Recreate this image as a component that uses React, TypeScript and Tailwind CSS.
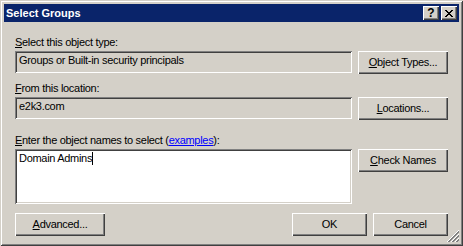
import type { ReactNode } from "react";

const raised =
  "bg-[#d4d0c8] shadow-[inset_1px_1px_0_#ffffff,inset_-1px_-1px_0_#404040,inset_-2px_-2px_0_#808080]";
const sunken =
  "shadow-[inset_1px_1px_0_#808080,inset_-1px_-1px_0_#ffffff,inset_2px_2px_0_#404040,inset_-2px_-2px_0_#d4d0c8]";

const Key = ({ children }: { children: ReactNode }) => <span className="underline underline-offset-[1px]">{children}</span>;

const Button = ({ children, className = "" }: { children: ReactNode; className?: string }) => (
  <button className={`${raised} h-[23px] flex items-center justify-center text-black leading-[13px] ${className}`}>
    {children}
  </button>
);

const XGlyph = () => (
  <svg width="8" height="7" viewBox="0 0 8 7" shapeRendering="crispEdges">
    {[0, 1, 2, 3, 4, 5, 6].map((i) => (
      <g key={i} fill="#000">
        <rect x={i} y={i} width="2" height="1" />
        <rect x={6 - i} y={i} width="2" height="1" />
      </g>
    ))}
  </svg>
);

const SizeGrip = () => {
  const px: { x: number; y: number; c: string }[] = [];
  const lines: [number, string][] = [
    [11, "#ffffff"], [12, "#808080"], [13, "#808080"],
    [15, "#ffffff"], [16, "#808080"], [17, "#808080"],
    [19, "#ffffff"], [20, "#808080"], [21, "#808080"],
  ];
  lines.forEach(([s, c]) => {
    for (let x = s - 11; x <= 11; x++) px.push({ x, y: s - x, c });
  });
  return (
    <svg width="12" height="12" viewBox="0 0 12 12" shapeRendering="crispEdges" className="absolute right-[4px] bottom-[4px]">
      {px.map((p, i) => (
        <rect key={i} x={p.x} y={p.y} width="1" height="1" fill={p.c} />
      ))}
    </svg>
  );
};

export default function App() {
  return (
    <div className="relative w-[463px] h-[246px] bg-[#d4d0c8] p-[4px] shadow-[inset_1px_1px_0_#d4d0c8,inset_-1px_-1px_0_#404040,inset_2px_2px_0_#ffffff,inset_-2px_-2px_0_#808080] font-['Liberation_Sans',Arial,sans-serif] text-[11px] text-black">
      <div className="h-[18px] bg-[#0a246a] flex items-center justify-between pl-[2px] pr-[2px]">
        <span className="text-white font-bold text-[11px] leading-[13px]">Select Groups</span>
        <div className="flex gap-[2px]">
          <div className={`${raised} w-[16px] h-[14px] flex items-center justify-center font-bold text-[12px] leading-[12px]`}>?</div>
          <div className={`${raised} w-[16px] h-[14px] flex items-center justify-center`}>
            <XGlyph />
          </div>
        </div>
      </div>

      <div className="flex flex-col px-[11px] tracking-[-0.3px]">
        <div className="mt-[14px] leading-[13px]">
          <Key>S</Key>elect this object type:
        </div>
        <div className="mt-[2px] flex gap-[6px] items-start">
          <div className={`${sunken} bg-[#d4d0c8] w-[337px] h-[22px] pl-[4px] pt-[3px] leading-[13px]`}>
            Groups or Built-in security principals
          </div>
          <Button className="w-[90px]">
            <Key>O</Key>bject Types...
          </Button>
        </div>

        <div className="mt-[8px] leading-[13px]">
          <Key>F</Key>rom this location:
        </div>
        <div className="mt-[2px] flex gap-[6px] items-start">
          <div className={`${sunken} bg-[#d4d0c8] w-[337px] h-[22px] pl-[4px] pt-[3px] leading-[13px]`}>e2k3.com</div>
          <Button className="w-[90px]">
            <Key>L</Key>ocations...
          </Button>
        </div>

        <div className="mt-[14px] leading-[13px]">
          <Key>E</Key>nter the object names to select (<span className="text-[#0000ff] underline underline-offset-[1px]">examples</span>):
        </div>
        <div className="mt-[2px] flex gap-[6px] items-start">
          <div className={`${sunken} bg-white w-[337px] h-[55px] pl-[4px] pt-[3px] leading-[13px] flex items-start`}>
            <span>Domain Admins</span>
            <span className="w-px h-[13px] bg-black" />
          </div>
          <Button className="w-[90px]">
            <Key>C</Key>heck Names
          </Button>
        </div>

        <div className="mt-[9px] flex items-start">
          <Button className="w-[90px]">
            <Key>A</Key>dvanced...
          </Button>
          <div className="flex-1" />
          <Button className="w-[75px]">OK</Button>
          <Button className="w-[75px] ml-[6px]">Cancel</Button>
        </div>
      </div>
      <SizeGrip />
    </div>
  );
}
